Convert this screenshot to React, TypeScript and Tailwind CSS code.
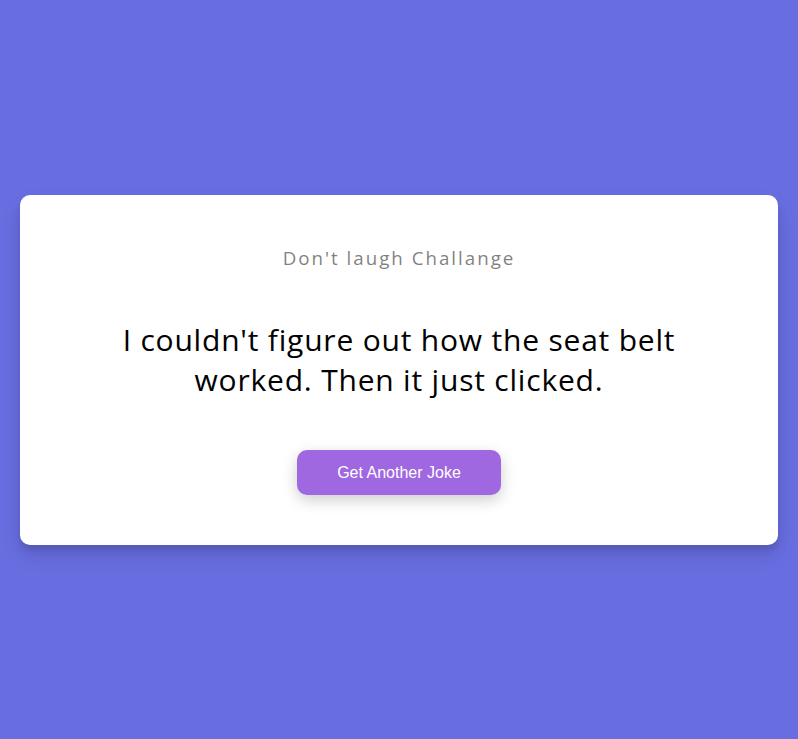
export default function App() {
  return (
    <div
      className="flex min-h-screen flex-col items-center justify-center bg-[#686de0] p-5"
      style={{ fontFamily: '"Open Sans", "Noto Sans", sans-serif' }}
    >
      <div className="w-[800px] max-w-full rounded-[10px] bg-white px-5 py-[50px] text-center shadow-[0_10px_20px_rgba(0,0,0,0.1),0_6px_6px_rgba(0,0,0,0.1)]">
        <h3 className="m-0 text-[18.72px] font-normal leading-[25px] tracking-[2px] text-black opacity-50">
          Don't laugh Challange
        </h3>
        <div className="mx-auto my-[50px] max-w-[600px] text-[30px] leading-[40px] tracking-[0.8px] text-black">
          I couldn't figure out how the seat belt worked. Then it just clicked.
        </div>
        <button
          type="button"
          className="rounded-[10px] border-0 bg-[#9f68e0] px-10 py-[13px] text-base leading-[19px] text-white shadow-[0_5px_15px_rgba(0,0,0,0.2)]"
          style={{ fontFamily: '"Liberation Sans", Arial, sans-serif' }}
        >
          Get Another Joke
        </button>
      </div>
    </div>
  );
}
